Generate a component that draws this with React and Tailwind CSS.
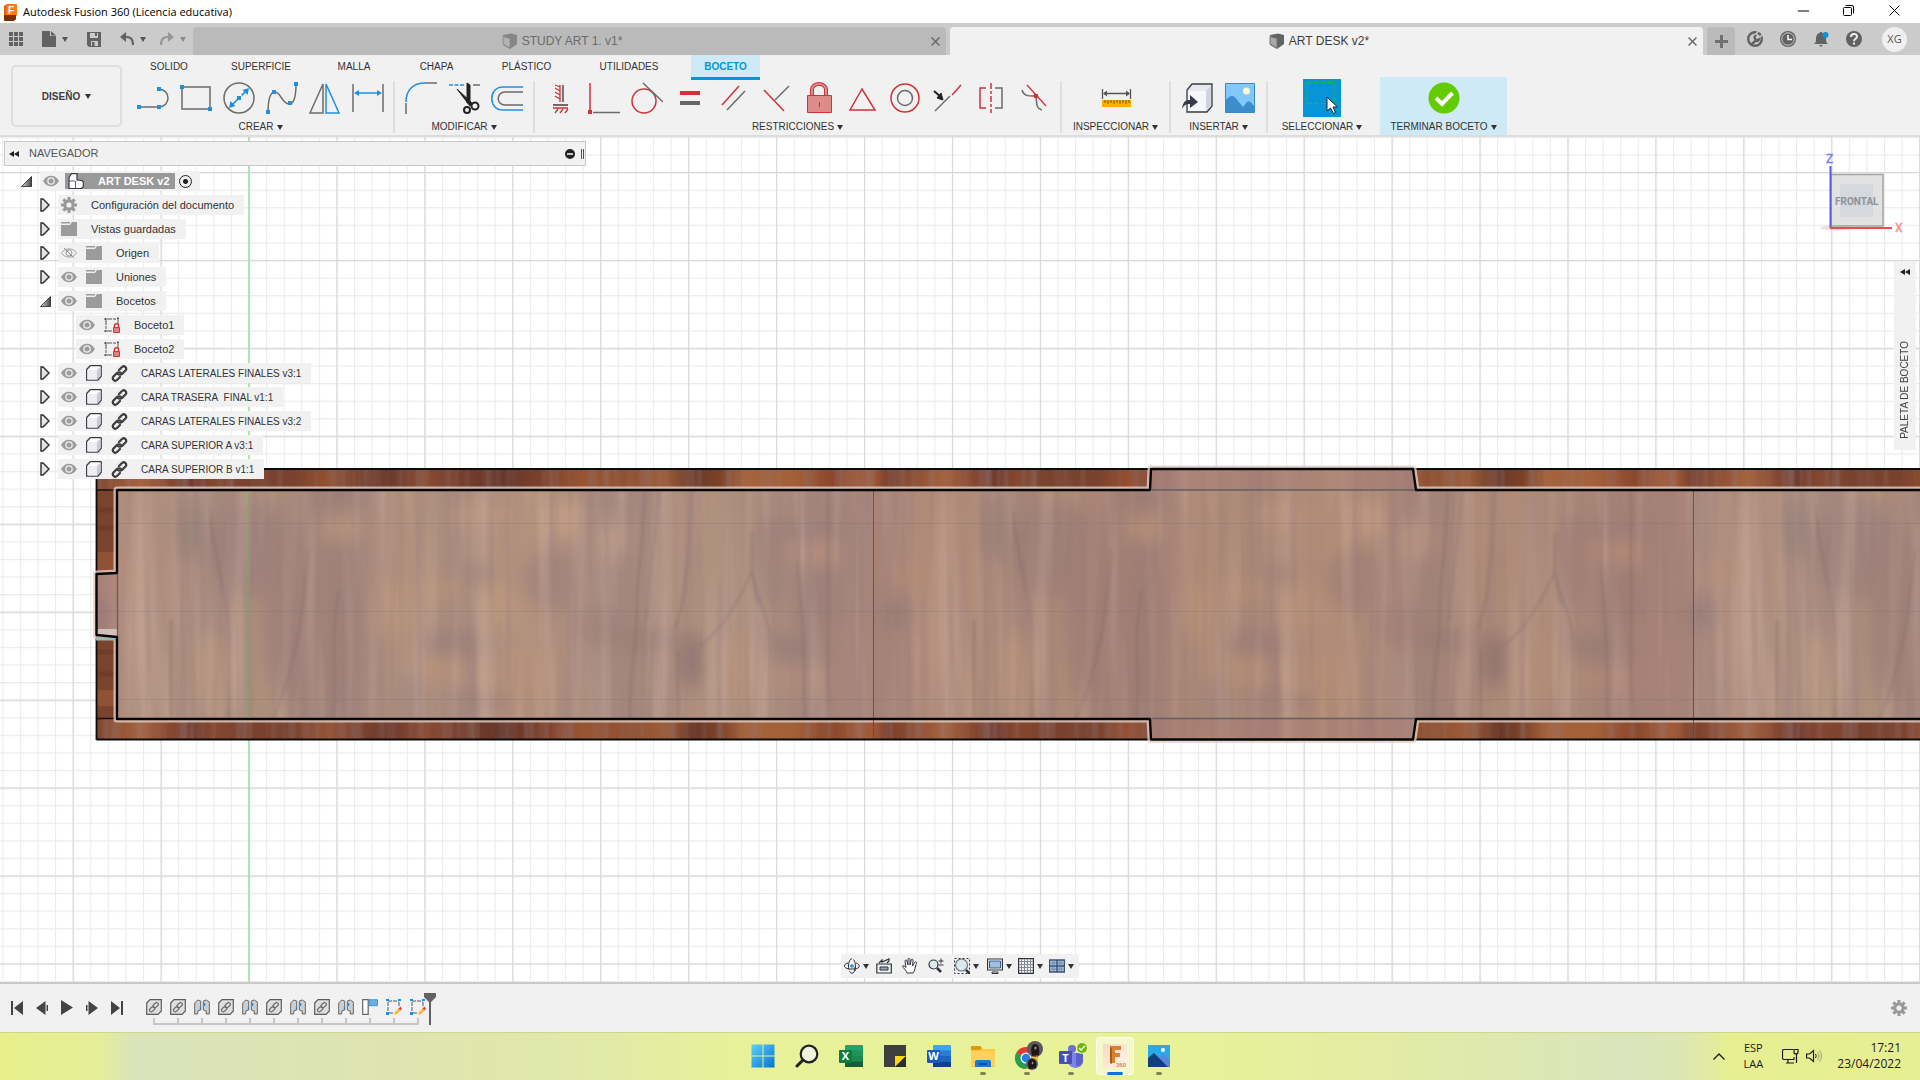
import React from "react";

const UI = "font-['Liberation_Sans',Arial,sans-serif]";
const SEGOE = "font-['Open_Sans','Noto_Sans',sans-serif]";

function Svg({ w = 32, h = w, vb, className = "", children }) {
  return (
    <svg
      width={w}
      height={h}
      viewBox={vb || `0 0 ${w} ${h}`}
      fill="none"
      aria-hidden="true"
      className={`shrink-0 ${className}`}
    >
      {children}
    </svg>
  );
}

function Caret({ color = "#333" }) {
  return (
    <Svg w={6} h={5}>
      <path d="M0 0h6L3 5z" fill={color} />
    </Svg>
  );
}

/* ---------- Title bar ---------- */

function FusionLogo() {
  return (
    <Svg w={16} h={18}>
      <path d="M2 3 5 1h9v15l-3 2H2z" fill="#e5600a" />
      <rect x="4" y="1" width="11" height="12" rx="1" fill="#ff7a12" />
      <path d="M2 12h12v4l-2 2H3l-1-1z" fill="#7a2f05" />
      <text x="6" y="11" fontSize="10" fontWeight="700" fill="#fff" fontFamily="Liberation Sans">F</text>
    </Svg>
  );
}

function TitleBar() {
  return (
    <header className={`flex h-[23px] shrink-0 items-center bg-white pr-[3px] pl-0.5 text-black ${SEGOE}`}>
      <FusionLogo />
      <h1 className="ml-[5px] text-[11px] leading-4">Autodesk Fusion 360 (Licencia educativa)</h1>
      <div className="ml-auto flex h-[21px] self-start">
        <button aria-label="Minimizar" className="flex w-[46px] items-center justify-center">
          <Svg w={11}><path d="M0 6h11" stroke="#000" /></Svg>
        </button>
        <button aria-label="Restaurar" className="flex w-[45px] items-center justify-center">
          <Svg w={11}>
            <rect x=".5" y="2.5" width="8" height="8" rx="1" stroke="#000" />
            <path d="M2.5 .5H9a1.5 1.5 0 0 1 1.500 1.500V8.500" stroke="#000" />
          </Svg>
        </button>
        <button aria-label="Cerrar" className="flex w-[46px] items-center justify-center">
          <Svg w={11}><path d="m.5.5 10 10m0-10-10 10" stroke="#000" /></Svg>
        </button>
      </div>
    </header>
  );
}

/* ---------- Document tabs ---------- */

function DocCube({ dim }) {
  return (
    <Svg w={16}>
      <path d="M1 2 9 .5 15 2v9l-7 5-7-4z" fill={dim ? "#858585" : "#636363"} />
      <path d="M1 3.500 8 5.500V15l-7-4z" fill={dim ? "#b3b3b3" : "#a9a9a9"} stroke={dim ? "#8c8c8c" : "#777"} />
    </Svg>
  );
}

function DocTab({ title, active }) {
  return (
    <div
      className={`flex h-7 flex-1 items-center rounded-t-[4px] pr-[3px] ${
        active ? "bg-[#f1f1f1] text-[#3c3c3c]" : "bg-[#bababa] text-[#6a6a6a]"
      }`}
    >
      <button className="flex flex-1 items-center justify-center gap-1 pl-1 text-[12px] leading-4">
        <DocCube dim={!active} />
        {title}
      </button>
      <button aria-label={`Cerrar ${title}`} className="flex size-4 items-center justify-center">
        <Svg w={9}><path d="m.5.5 8 8m0-8-8 8" stroke="#6c6c6c" strokeWidth="1.500" /></Svg>
      </button>
    </div>
  );
}

function TabBar() {
  return (
    <div className="flex h-8 shrink-0 items-end bg-[#cbcbcb]">
      <div className="flex h-8 w-[193px] shrink-0 items-center pl-[9px]">
        <button aria-label="Panel de datos">
          <Svg w={14}>
            {[0, 5, 10].map((x) => [0, 5, 10].map((y) => <rect key={`${x}-${y}`} x={x} y={y} width="4" height="4" fill="#626262" />))}
          </Svg>
        </button>
        <button aria-label="Archivo" className="ml-[19px] flex items-center gap-[6px]">
          <Svg w={14} h={16}>
            <path d="M0 0h8v5h6v11H0z" fill="#626262" />
            <path d="m9 0 5 4.500H9z" fill="#626262" />
          </Svg>
          <Caret color="#555" />
        </button>
        <button aria-label="Guardar" className="ml-[19px]">
          <Svg w={14} h={15}>
            <path d="M0 0h14v15H2l-2-2z" fill="#626262" />
            <path d="M3 1h8v5H3zM4 9h7v5H4z" fill="#cbcbcb" />
            <path d="M5 10h2.500v4H5zM8 1h2v3H8z" fill="#626262" />
          </Svg>
        </button>
        <button aria-label="Deshacer" className="ml-[19px] flex items-center gap-[6px]">
          <Svg w={14} h={14}>
            <path d="M4 5h3c4 0 6 2 6 8" stroke="#626262" strokeWidth="2.200" />
            <path d="M0 5 6 0v10z" fill="#626262" />
          </Svg>
          <Caret color="#555" />
        </button>
        <button aria-label="Rehacer" className="ml-[14px] flex items-center gap-[6px]">
          <Svg w={14} h={14}>
            <path d="M10 5H7c-4 0-6 2-6 8" stroke="#969696" strokeWidth="2.200" />
            <path d="M14 5 8 0v10z" fill="#969696" />
          </Svg>
          <Caret color="#8b8b8b" />
        </button>
      </div>
      <div className="flex flex-1 gap-1">
        <DocTab title="STUDY ART 1. v1*" />
        <DocTab title="ART DESK v2*" active />
      </div>
      <button aria-label="Nueva pestaña" className="ml-1 flex h-7 w-7 items-center justify-center rounded-t-[4px] bg-[#bababa]">
        <Svg w={13}><path d="M6.500 0v13M0 6.500h13" stroke="#707070" strokeWidth="3" /></Svg>
      </button>
      <div className="flex h-8 items-center gap-[17px] pr-[13px] pl-3">
        <button aria-label="Extensiones">
          <Svg w={16}>
            <circle cx="8" cy="8" r="6.800" stroke="#626262" strokeWidth="2.400" />
            <path d="M3 13 7.500 9C5 6 7 3 10 4L8.500 6.500 10 8l3-1.500c1 3-2 5.500-4 4.500l-4 3.500z" fill="#626262" />
            <path d="m11.500 0-2.500 3M15.500 3.500 13 6" stroke="#cbcbcb" strokeWidth="1.500" />
          </Svg>
        </button>
        <button aria-label="Estado de trabajos">
          <Svg w={16}>
            <circle cx="8" cy="8" r="8" fill="#626262" />
            <circle cx="8" cy="8" r="6.200" stroke="#cbcbcb" />
            <path d="M8 4v4.500h4" stroke="#fff" strokeWidth="1.500" />
          </Svg>
        </button>
        <button aria-label="Notificaciones">
          <Svg w={16} h={17}>
            <path d="M1 13c2-1 2-3 2-6 0-3 2-5 4-5V1h2v1c2 0 4 2 4 5 0 3 0 5 2 6zM6 14h4l-2 2z" fill="#626262" />
            <circle cx="12.500" cy="4" r="3" fill="#0696d7" />
          </Svg>
        </button>
        <button aria-label="Ayuda">
          <Svg w={16}>
            <circle cx="8" cy="8" r="8" fill="#626262" />
            <path d="M5 6c0-4 6-4 6-.5C11 8 8 7.500 8 10.200M8 11.500v2" stroke="#eee" strokeWidth="2" />
          </Svg>
        </button>
        <button className={`-my-1 ml-[3px] flex size-[25px] items-center justify-center rounded-full bg-[#f0f0f0] text-[11px] text-[#555] ${SEGOE}`}>XG</button>
      </div>
    </div>
  );
}

/* ---------- Ribbon ---------- */

const G = "#6b6b6b";
const B = "#1f8fe0";
const R = "#d03238";

const Dot = ({ x, y, c = B }) => <rect x={x - 2} y={y - 2} width="4" height="4" fill={c} />;

const createIcons = [
  ["Línea", <><path d="M2 25h20M22 7c12 1 12 17 0 18" stroke={G} strokeWidth="1.500" /><Dot x={2} y={25} /><Dot x={22} y={25} /><Dot x={22} y={7} /></>],
  ["Rectángulo", <><path d="M2 5h28v22H2z" stroke={G} strokeWidth="1.500" /><Dot x={2} y={5} /><Dot x={30} y={27} /></>],
  ["Círculo", <><circle cx="16" cy="16" r="15" stroke={G} strokeWidth="1.500" /><path d="m8 24 16-16" stroke={B} strokeWidth="1.500" strokeDasharray="9 2 2 2 12" /><path d="m6 26 1.500-7 5 5zM26 6l-1.500 7-5-5z" fill={B} /><Dot x={16} y={16} /></>],
  ["Spline", <><path d="M2 31C2 15 5 10 9 10c6 0 7 12 14 12 5 0 7-6 7-20" stroke={G} strokeWidth="1.500" /><Dot x={2} y={30} /><Dot x={8} y={10} /><Dot x={24} y={21} /><Dot x={30} y={2} /></>],
  ["Simetría", <><path d="M14 2v29H1z" stroke={G} strokeWidth="1.500" /><path d="M17 2v29h13z" stroke={B} strokeWidth="1.500" /></>],
  ["Cota", <><path d="M1 2v28M31 2v28" stroke={G} strokeWidth="1.500" /><path d="M4 11h24" stroke={B} strokeWidth="1.500" /><path d="m2 11 5-3v6zM30 11l-5-3v6z" fill={B} /></>],
];
const modifyIcons = [
  ["Empalme", <><path d="M1 20C1 8 8 1 20 1" stroke={B} strokeWidth="1.500" /><path d="M1 21v11M20 1h12" stroke={G} strokeWidth="1.500" /></>],
  ["Recortar", <><path d="M1 3h15" stroke={B} strokeWidth="1.500" strokeDasharray="4 1.500" /><path d="M25 3h7" stroke={G} strokeWidth="1.500" /><path d="M19 1v20h3V3zM9 7l13 17 2-3z" fill="#222" stroke="#222" /><circle cx="19" cy="28" r="3" stroke="#222" strokeWidth="2" /><circle cx="27" cy="24" r="3.500" stroke="#222" strokeWidth="2" /></>],
  ["Desfase", <><path d="M32 5H12c-15 0-15 23 0 23h20" stroke={B} strokeWidth="1.500" /><path d="M32 10H14c-9 0-9 13 0 13h18" stroke={G} strokeWidth="1.500" /></>],
];
const constraintIcons = [
  ["Horizontal/Vertical", <><path d="M15 3v17M15 5l-5-2M15 9l-5-3M15 13l-5-3M15 17l-5-3M8 26h15M10 31l3-4M15 31l3-4M20 31l3-4" stroke={R} strokeWidth="1.300" /><path d="M18 3v17M8 23h15" stroke={G} strokeWidth="1.800" /></>],
  ["Perpendicular", <><path d="M2 1v27" stroke={R} strokeWidth="1.500" /><path d="M5 30.500h27" stroke={G} strokeWidth="1.500" /><Dot x={2} y={30} c={R} /></>],
  ["Tangente", <><circle cx="13" cy="19" r="12" stroke={R} strokeWidth="1.500" /><path d="m12 1 20 19" stroke={G} strokeWidth="1.500" /></>],
  ["Igual", <><path d="M6 9h20v4H6z" fill={R} /><path d="M6 19h20v4H6z" fill="#666" /></>],
  ["Paralelo", <><path d="M5 23 22 4" stroke={R} strokeWidth="1.500" /><path d="M10 28 28 9" stroke={G} strokeWidth="1.500" /></>],
  ["Coincidente", <><path d="m4 8 20 21" stroke={R} strokeWidth="1.500" /><path d="M15 18 29 4" stroke={G} strokeWidth="1.500" /></>],
  ["Bloquear", <><path d="M9 13V8c0-8 14-8 14 0v5" stroke={R} strokeWidth="4" /><path d="M9 13V8c0-8 14-8 14 0v5" stroke="#dd8b8b" strokeWidth="2" /><path d="M4.500 13.500h24v17h-24z" fill="#dd8b8b" stroke={R} /><path d="M16.500 20v5" stroke={R} /></>],
  ["Punto medio", <path d="M16 7 4 28h25z" stroke={R} strokeWidth="1.500" />],
  ["Concéntrico", <><circle cx="16" cy="16" r="14" stroke={R} strokeWidth="1.500" /><circle cx="16" cy="16" r="7.500" stroke={G} strokeWidth="1.500" /></>],
  ["Colineal", <><path d="M20 13 29 3" stroke={R} strokeWidth="1.500" /><path d="M3 29 18 14" stroke={G} strokeWidth="1.500" /><path d="m2 9 8 7" stroke="#222" strokeWidth="2" /><path d="m11 18-2-7-4 5z" fill="#222" stroke="#222" /></>],
  ["Simetría (restricción)", <><path d="M11 6H5v20h6" stroke={R} strokeWidth="1.500" /><path d="M16 1v30" stroke={R} strokeWidth="1.500" strokeDasharray="6 2 3 2" /><path d="M20 6h7v20h-7" stroke={G} strokeWidth="1.500" /></>],
  ["Curvatura", <><path d="M4 8c2 7 8 6 14 6 1 6-1 12 6 14" stroke={G} strokeWidth="1.500" /><path d="m9 3 19 21" stroke={R} strokeWidth="1.300" /><Dot x={18} y={14} c={R} /></>],
];
const inspectIcons = [
  ["Medir", <><path d="M2.500 7v10M30.500 7v10M4 11.500h25" stroke="#555" strokeWidth="1.300" /><path d="m3 11.500 4-3v6zM30 11.500l-4-3v6z" fill="#555" /><path d="M2 18h29v7H2z" fill="#ffab0f" /><path d="M5 18v3M8 18v4M11 18v3M14 18v4M17 18v3M20 18v4M23 18v3M26 18v4M29 18v3" stroke="#7d5200" /></>],
];
const insertIcons = [
  ["Insertar derivado", <><path d="m6 8 5-6h20v22l-5 6H6z" fill="#e6e9ee" stroke="#383c48" strokeWidth="1.300" /><path d="M7 9h18v20H7z" fill="#f5f7f9" /><path d="M25 9v20l5-5V4z" fill="#d0d4dc" /><path d="M1 27c1-8 4-9 8-9v-5l8 7-8 6v-4c-4 0-6 1-8 5z" fill="#383c48" /></>],
  ["Insertar imagen", <><path d="M1.500 1.500h29v29h-29z" fill="#82c8fb" stroke="#3a88c4" /><path d="M2 18c5-6 8-5 12 1l5 6 4-5c3-2 4 1 7 4v6H2z" fill="#3c8dcc" /><circle cx="22.500" cy="9" r="3.500" fill="#fdfad0" /></>],
];

function ToolGroup({ label, icons, className }) {
  return (
    <div className={`my-[2px] mt-[4px] flex flex-col items-center border-r-2 border-[#dedede] ${className}`}>
      <div className="flex">
        {icons.map(([name, art]) => (
          <button key={name} aria-label={name} className="flex h-[34px] w-[43px] items-center justify-center">
            <Svg w={32}>{art}</Svg>
          </button>
        ))}
      </div>
      <GroupLabel>{label}</GroupLabel>
    </div>
  );
}

function GroupLabel({ children }) {
  return (
    <button className="mt-[6px] flex items-center gap-[3px] whitespace-nowrap text-[10px] leading-3 text-[#333]">
      {children}
      <Caret />
    </button>
  );
}

const ribbonTabs = [
  ["SOLIDO", "w-[64px]"],
  ["SUPERFICIE", "w-[120px]"],
  ["MALLA", "w-[66px]"],
  ["CHAPA", "w-[99px]"],
  ["PLÁSTICO", "w-[81px]"],
  ["UTILIDADES", "w-[124px]"],
];

function Ribbon() {
  return (
    <div className="flex h-[82px] shrink-0 border-b-2 border-[#dcdcdc] bg-[#f1f1f1]">
      <button className="mt-[10px] ml-[11px] flex h-[62px] w-[111px] shrink-0 items-center justify-center gap-[5px] rounded-[5px] border-2 border-[#dedede] text-[10px] font-bold text-[#3c3c3c]">
        DISEÑO
        <Caret />
      </button>
      <div className="ml-[6px] flex flex-1 flex-col">
        <nav className="ml-[9px] flex h-[22px] items-start text-[10px] text-[#333]">
          {ribbonTabs.map(([t, w]) => (
            <button key={t} className={`h-[22px] shrink-0 text-center ${w}`}>{t}</button>
          ))}
          <button className="h-[25px] w-[69px] shrink-0 border-b-[3px] border-[#0696d7] bg-[#cdeaf6] font-bold text-[#0696d7]">BOCETO</button>
        </nav>
        <div className="flex flex-1">
          <ToolGroup label="CREAR" icons={createIcons} className="w-[267px]" />
          <ToolGroup label="MODIFICAR" icons={modifyIcons} className="w-[140px]" />
          <ToolGroup label="RESTRICCIONES" icons={constraintIcons} className="w-[527px]" />
          <ToolGroup label="INSPECCIONAR" icons={inspectIcons} className="w-[109px]" />
          <ToolGroup label="INSERTAR" icons={insertIcons} className="w-[97px]" />
          <div className="flex w-[108px] flex-col items-center pt-[2px]">
            <button aria-label="Seleccionar" className="flex h-[38px] w-[38px] items-center justify-center bg-[#0696d7]">
              <Svg w={38}>
                <path d="M4 3.500h27v21H4z" stroke="#25b53c" strokeDasharray="5 2" />
                <path d="M24 18v14l3.500-3 3 5.500 2-1-2.500-5.500h4.500z" fill="#fff" stroke="#222" />
              </Svg>
            </button>
            <div className="-mt-[2px]"><GroupLabel>SELECCIONAR</GroupLabel></div>
          </div>
          <div className="ml-1 flex w-[127px] flex-col items-center bg-[#cdeaf6] pt-[4px]">
            <button aria-label="Terminar boceto" className="flex h-[34px] items-center">
              <Svg w={32}>
                <circle cx="16" cy="16" r="15.500" fill="#63cb00" />
                <path d="m8 16 6 6L24.500 11" stroke="#fff" strokeWidth="4" />
              </Svg>
            </button>
            <GroupLabel>TERMINAR BOCETO</GroupLabel>
          </div>
        </div>
      </div>
    </div>
  );
}

/* ---------- Viewport drawing ---------- */

const faceStops = [
  [0, "#a58377"], [5, "#a3857a"], [8, "#ae8d7c"], [14, "#b0907d"], [19, "#a4897c"], [23, "#a68879"],
  [27, "#ad9079"], [31, "#a08176"], [36, "#9a7e76"], [40, "#a8897a"], [45, "#b0917b"], [50, "#a5887a"],
  [55, "#b1917c"], [61, "#b0907a"], [69, "#a0857a"], [72, "#a0857a"], [77, "#ac8d7a"], [85, "#ac8f7c"],
  [91, "#a58879"], [95, "#a08177"], [100, "#a58377"],
];
const railStops = [
  [0, "#a05a38"], [2, "#a05a38"], [4, "#7b402c"], [6, "#85472f"], [11, "#a5643f"], [14, "#8d4c32"],
  [17, "#70392c"], [20, "#85472f"], [24, "#79422f"], [30, "#7a422e"], [34, "#93502f"], [38, "#7b432f"],
  [42, "#6d3b2c"], [46, "#8a4b33"], [52, "#713c2b"], [56, "#643529"], [62, "#84452d"], [66, "#975532"],
  [72, "#90502f"], [76, "#9d5d39"], [80, "#6a392a"], [83, "#7d4227"], [86, "#a5633d"], [92, "#a36039"],
  [97, "#8b472c"], [100, "#a05a38"],
];

const blobs = [
  [137, 40, 8, 26, "#897a73"], [40, 125, 14, 14, "#937c78"], [200, 60, 40, 40, "#997e77"],
  [240, 130, 26, 70, "#9b7e76"], [290, 38, 18, 12, "#b99678"], [430, 25, 26, 10, "#b9957f"],
  [510, 28, 14, 18, "#c49f85"], [560, 50, 14, 18, "#b89680"], [425, 85, 9, 9, "#8b7470"],
  [370, 100, 34, 9, "#b59378"], [500, 90, 26, 26, "#9e8178"], [345, 120, 14, 24, "#b8957a"],
  [450, 115, 14, 20, "#bc987b"], [400, 155, 26, 12, "#977d77"], [390, 180, 20, 12, "#b89379"],
  [470, 195, 24, 26, "#b89379"], [430, 212, 26, 7, "#987d76"], [545, 135, 20, 18, "#987c75"],
  [360, 215, 8, 28, "#8f7974"], [638, 170, 9, 24, "#816c6a"], [720, 70, 14, 40, "#9c8078"],
  [760, 62, 24, 6, "#bd937a"], [750, 40, 40, 7, "#997c77"], [725, 158, 44, 9, "#927a75"],
  [765, 110, 16, 26, "#997d76"], [160, 190, 20, 40, "#b2937c"], [590, 150, 30, 10, "#977c73"],
  [750, 190, 24, 7, "#b38c78"], [690, 180, 24, 30, "#b3927c"], [60, 85, 20, 12, "#b28d79"],
];

function Viewport() {
  const inner =
    "M117 490H1150L1151 469H1413L1416 490H1940V719H1416L1413 739.500H1151L1150 719H117V637L96.500 635V574L117 573Z";
  return (
    <svg className="absolute inset-0 size-full" aria-hidden="true">
      <defs>
        <pattern id="minor" width="17.586" height="17.586" patternUnits="userSpaceOnUse" x="248.500" y="172">
          <path d="M0 .5H18M.5 0V18" stroke="#ebebeb" strokeWidth="1.200" />
        </pattern>
        <pattern id="major" width="87.930" height="87.930" patternUnits="userSpaceOnUse" x="248.500" y="172">
          <path d="M0 .5H88M.5 0V88" stroke="#d8d8d8" strokeWidth="1.300" />
        </pattern>
        <linearGradient id="face">
          {faceStops.map(([o, c]) => <stop key={o} offset={`${o}%`} stopColor={c} />)}
        </linearGradient>
        <linearGradient id="rail">
          {railStops.map(([o, c]) => <stop key={o} offset={`${o}%`} stopColor={c} />)}
        </linearGradient>
        <filter id="soft" x="-50%" y="-50%" width="200%" height="200%"><feGaussianBlur stdDeviation="9" /></filter>
        <filter id="thin" x="-20%" y="-20%" width="140%" height="140%"><feGaussianBlur stdDeviation="1.500" /></filter>
        <filter id="grain" x="0" y="0" width="100%" height="100%">
          <feTurbulence type="fractalNoise" baseFrequency="0.08 0.003" numOctaves="3" seed="7" />
          <feColorMatrix values="0 0 0 0 .30  0 0 0 0 .20  0 0 0 0 .20  2.600 0 0 0 -1.100" />
        </filter>
        <filter id="figure" x="0" y="0" width="100%" height="100%">
          <feTurbulence type="fractalNoise" baseFrequency="0.050 0.004" numOctaves="2" seed="12" />
          <feColorMatrix values="0 0 0 0 .86  0 0 0 0 .68  0 0 0 0 .56  3 0 0 0 -1.350" />
        </filter>
        <clipPath id="bodyClip"><rect x="96" y="469" width="3000" height="270" /></clipPath>
        <clipPath id="innerClip"><path d={inner} /></clipPath>
        <g id="railTile">
          <rect x="0" y="465" width="804" height="280" fill="url(#rail)" />
          <rect x="0" y="465" width="804" height="280" filter="url(#grain)" opacity=".45" />
        </g>
        <g id="faceTile">
          <rect x="0" y="465" width="804" height="280" fill="url(#face)" />
          <g transform="translate(0 490)">
            <g filter="url(#soft)" opacity=".9">
              {blobs.map(([x, y, rx, ry, c], i) => <ellipse key={i} cx={x} cy={y} rx={rx * 1.2} ry={ry * 1.2} fill={c} />)}
            </g>
            <g stroke="#6f6262" strokeWidth="2.200" fill="none" filter="url(#thin)" opacity=".45">
              <path d="M154 0C158 60 172 90 176 140V230M256 60C250 120 245 170 220 230" />
              <path d="M118 130V230M286 100C276 150 285 190 280 230" />
              <path d="M592 0C590 60 583 90 584 120C584 160 575 190 577 230M606 0C602 60 595 80 594 130" />
              <path d="M638 0C636 80 632 110 622 140" />
              <path d="M699 42V80C690 105 670 138 648 156M699 80C702 110 715 120 717 150V230" />
              <path d="M746 0V90C752 140 750 180 752 230M775 0V230" />
              <path d="M600 140C598 180 596 200 597 230M625 160V230" />
            </g>
            <path d="M699 80 709 118 703 112Z" fill="#746a64" opacity=".6" filter="url(#thin)" />
          </g>
          <rect x="0" y="465" width="804" height="280" filter="url(#figure)" opacity=".24" />
          <rect x="0" y="465" width="804" height="280" filter="url(#grain)" opacity=".46" />
        </g>
      </defs>
      <g transform="translate(0 -137)">
        <rect x="0" y="137" width="100%" height="100%" fill="#fff" />
        <rect x="0" y="137" width="100%" height="100%" fill="url(#minor)" />
        <rect x="0" y="137" width="100%" height="100%" fill="url(#major)" />
        <path d="M249 137V2200" stroke="#9be79b" strokeWidth="1.500" />

        <g clipPath="url(#bodyClip)">
          <use href="#railTile" x="53" />
          <use href="#railTile" x="856" />
          <use href="#railTile" x="1659" />
          <rect x="97" y="491" width="20" height="227" fill="#7b432e" />
          <path d="M97 510h20M97 528h20M97 652h20M97 674h20" stroke="#683627" strokeWidth="5" opacity=".5" />
          <path d="M97 552h20v18H97zM97 690h20v16H97z" fill="#a05b38" opacity=".6" />
          <path d="M96 490h21M96 718.500h21" stroke="#111" strokeWidth="1.500" />
        </g>
        <path d="M96.500 740V469H3000M96.500 739.500H3000" stroke="#0c0c0c" strokeWidth="1.800" fill="none" />

        <path d={inner} stroke="#e3cfc4" strokeOpacity=".8" strokeWidth="7" strokeLinejoin="round" fill="none" />
        <g clipPath="url(#innerClip)">
          <use href="#faceTile" x="53" />
          <use href="#faceTile" x="856" />
          <use href="#faceTile" x="1659" />
          <rect x="97" y="465" width="3000" height="280" fill="#c9a090" opacity=".12" />
          <rect x="873" y="465" width="820" height="280" fill="#a86050" opacity=".09" />
          <path d="M97 492h20v228H97zM1150 465h267v25h-267zM1150 719h267v25h-267z" fill="#a4726c" opacity=".3" />
          <path d="M97 523.500H1940M97 611.500H1940M97 699.500H1940" stroke="#7d716c" strokeOpacity=".25" />
          <path d="M97 629h20v9H97z" fill="#dccfc9" opacity=".8" />
        </g>
        <path d="M96 639h21" stroke="#9bb8b3" strokeWidth="3" />
        <path d="M117.500 574V636M1152 490H1415M1152 718.500H1415" stroke="#5f6062" strokeWidth="1.300" />
        <path d="M873.500 490V739M1693.500 490V739" stroke="#54494a" strokeWidth="1" strokeOpacity=".8" />
        <path d={inner} stroke="#060606" strokeWidth="2.400" fill="none" strokeLinejoin="round" />
        <path d="M249 491V718" stroke="#6cae62" strokeOpacity=".75" strokeWidth="1.300" />
      </g>
    </svg>
  );
}

/* ---------- Browser tree ---------- */

function Eye({ off }) {
  return off ? (
    <Svg w={16} h={12}>
      <path d="M.5 6C4 .5 12 .5 15.500 6 12 11.500 4 11.500.5 6Z" stroke="#a0a0a0" />
      <circle cx="8" cy="6" r="3" stroke="#a0a0a0" />
      <path d="m3 1 10 10" stroke="#8a8a8a" />
    </Svg>
  ) : (
    <Svg w={16} h={12}>
      <path d="M0 6C4-1 12-1 16 6c-4 7-12 7-16 0Z" fill="#9b9b9b" />
      <circle cx="8" cy="6" r="3.800" fill="#f1f1f1" />
      <circle cx="8" cy="6" r="2.500" fill="#9b9b9b" />
    </Svg>
  );
}

function Gear({ size = 16 }) {
  return (
    <Svg w={size} vb="0 0 16 16">
      <g fill="#999">
        {[0, 45, 90, 135].map((a) => <rect key={a} x="6.500" y="0" width="3" height="16" transform={`rotate(${a} 8 8)`} />)}
        <circle cx="8" cy="8" r="5.800" />
      </g>
      <circle cx="8" cy="8" r="2.600" fill="#f1f1f1" />
    </Svg>
  );
}

const Folder = () => (
  <Svg w={16} h={14}>
    <path d="M0 3h9l2-3h5v14H0z" fill="#9b9b9b" /><path d="M0 0h9v1.500H0z" fill="#9b9b9b" />
  </Svg>
);
const SketchLock = () => (
  <Svg w={16} h={17}>
    <path d="M3 2h9M2 3v9M14 3v4M3 14h5" stroke="#555" strokeDasharray="5 1" />
    <path d="M.5 1h2v2h-2zM13 .5h2v2h-2zM.5 13h2v2h-2z" fill="#555" />
    <path d="M10.500 10V8.500c0-2.500 4-2.500 4 0V10" stroke={R} strokeWidth="1.500" />
    <path d="M9.500 10.500h6v5h-6z" fill="#dd8080" stroke={R} />
  </Svg>
);
const Cube = () => (
  <Svg w={16}>
    <path d="m.7 4.500 3.500-3.800h11v10.500l-3.500 4H.7z" fill="#fff" stroke="#383c48" strokeWidth="1.300" strokeLinejoin="round" />
    <path d="M11 5v10l3.700-4V1.500z" fill="#c5cad3" /><path d="M1.500 5H11v9.500H1.500z" fill="#eceef2" />
  </Svg>
);
const Link = () => (
  <Svg w={17}>
    <g stroke="#3c3c3c" strokeWidth="2.200" strokeLinecap="round">
      <path d="m8 5 3-3c2.500-2 5.500 1 3.500 3.500l-3.500 3.500c-1 1-3 1-4 0" />
      <path d="m9 12-3 3c-2.500 2-5.500-1-3.500-3.500L6 8c1-1 3-1 4 0" />
    </g>
  </Svg>
);
const Closed = () => (
  <Svg w={10} h={14}><path d="M1 1h2l6 6-6 6H1z" fill="#e3e3e3" stroke="#2b2b2b" strokeWidth="1.400" /></Svg>
);
const Open = () => (
  <Svg w={11}>
    <defs><linearGradient id="open"><stop stopColor="#ddd" /><stop offset="1" stopColor="#444" /></linearGradient></defs>
    <path d="M10.500 .5v10H.5z" fill="url(#open)" stroke="#222" strokeWidth=".8" />
  </Svg>
);

const tree = [
  { t: "Configuración del documento", icons: [<Gear key="g" />] },
  { t: "Vistas guardadas", icons: [<Folder key="f" />] },
  { t: "Origen", icons: [<Eye key="e" off />, <Folder key="f" />] },
  { t: "Uniones", icons: [<Eye key="e" />, <Folder key="f" />] },
  { t: "Bocetos", open: true, icons: [<Eye key="e" />, <Folder key="f" />] },
  { t: "Boceto1", leaf: true, icons: [<Eye key="e" />, <SketchLock key="s" />] },
  { t: "Boceto2", leaf: true, icons: [<Eye key="e" />, <SketchLock key="s" />] },
  ...[
    "CARAS LATERALES FINALES v3:1",
    "CARA TRASERA\u00a0 FINAL v1:1",
    "CARAS LATERALES FINALES v3:2",
    "CARA SUPERIOR A v3:1",
    "CARA SUPERIOR B v1:1",
  ].map((t) => ({ t, caps: true, icons: [<Eye key="e" />, <Cube key="c" />, <Link key="l" />] })),
];

function Navigator() {
  return (
    <aside className="absolute top-1 left-1 w-[582px]">
      <div className="flex h-[25px] items-center border border-[#c9c9c9] bg-[#f1f1f1] pl-1">
        <button aria-label="Contraer navegador">
          <Svg w={10} h={6}><path d="M5 0v6L0 3zM10 0v6L5 3z" fill="#222" /></Svg>
        </button>
        <h2 className="ml-[10px] text-[11px] text-[#555]">NAVEGADOR</h2>
        <button aria-label="Opciones" className="ml-auto">
          <Svg w={10}><circle cx="5" cy="5" r="5" fill="#222" /><path d="M2 5h6" stroke="#fff" strokeWidth="1.500" /></Svg>
        </button>
        <span className="mr-px ml-[6px] h-2.5 w-[3px] border-x border-[#555]" />
      </div>
      <ul className="mt-[3px] text-[11px] text-[#333]">
        <li className="flex h-6 items-center pl-[17px]">
          <button aria-label="Contraer"><Open /></button>
          <div className="ml-2 flex h-5 items-center bg-[#f1f1f1] pr-2 pl-[3px]">
            <Eye />
            <button className="ml-[6px] flex h-4 w-[110px] items-center bg-[#999] pl-[3px] font-bold text-white">
              <Svg w={16}>
                <path d="M1 4.500 3.500.7H9V7l5 .5 1.300 1.500v5l-2 1.500H1z" fill="#fff" stroke="#383c48" strokeWidth="1.200" />
                <path d="M7.500 15V8M1 8h6" stroke="#383c48" strokeWidth=".8" />
              </Svg>
              <span className="ml-[14px] whitespace-nowrap text-[11px]">ART DESK v2</span>
            </button>
            <input type="radio" name="active" aria-label="Activar componente" defaultChecked className="ml-1 size-[13px] appearance-none rounded-full border border-[#222] bg-[radial-gradient(circle,#222_2px,transparent_3px)]" />
          </div>
        </li>
        {tree.map((n, i) => (
          <li key={i} className={`flex h-6 items-center ${n.leaf ? "pl-[72px]" : "pl-9"}`}>
            {!n.leaf && (
              <button aria-label={n.open ? "Contraer" : "Expandir"} className="flex w-[18px] items-center">
                {n.open ? <Open /> : <Closed />}
              </button>
            )}
            <div className="flex h-5 items-center gap-[9px] bg-[#f1f1f1] pr-[10px] pl-[3px]">
              {n.icons}
              <span className={`whitespace-nowrap ${n.caps ? "ml-1 text-[10px]" : "ml-[5px]"}`}>{n.t}</span>
            </div>
          </li>
        ))}
      </ul>
    </aside>
  );
}

function ViewCube() {
  return (
    <div className="absolute top-3 right-3">
      <Svg w={92} h={90}>
        <ellipse cx="20" cy="79" rx="16" ry="2.500" fill="#000" opacity=".1" />
        <path d="M15 25.500h52V77H15z" fill="#e2e2e2" stroke="#a3a3a3" strokeWidth="1.500" />
        <path d="M24 35h33v33H24z" fill="#d5d8dc" />
        <text x="19" y="56" fontSize="10" fontWeight="700" fill="#8d9299" fontFamily="Roboto, sans-serif">FRONTAL</text>
        <path d="M14.500 17v62" stroke="#5a5ae8" strokeWidth="2" />
        <path d="M14 79h62" stroke="#f04b4b" strokeWidth="2" />
        <text x="10" y="14" fontSize="12" fill="#7f7ff5" stroke="#7f7ff5" strokeWidth=".4" fontFamily="Roboto, sans-serif">Z</text>
        <text x="79" y="83" fontSize="12" fill="#fb8a8a" stroke="#fb8a8a" strokeWidth=".4" fontFamily="Roboto, sans-serif">X</text>
      </Svg>
    </div>
  );
}

function SketchPalette() {
  return (
    <aside className="absolute top-[124px] right-1 flex h-[189px] w-[22px] flex-col items-center justify-between bg-[#f1f1f1] pt-2 pb-[11px]">
      <button aria-label="Expandir paleta">
        <Svg w={10} h={6}><path d="M5 0v6L0 3zM10 0v6L5 3z" fill="#222" /></Svg>
      </button>
      <span className="rotate-180 text-[10px] leading-4 whitespace-nowrap text-[#444] [writing-mode:vertical-rl]">PALETA DE BOCETO</span>
    </aside>
  );
}

const N = "#30343e";
const viewTools = [
  ["Órbita", true, "w-[32px]", <><ellipse cx="8" cy="8" rx="3.500" ry="7.300" stroke={N} strokeDasharray="12 2" /><path d="M4 5C-1 6-1 10 5 11h6c6-1 5-5 1-6M11 9v4" stroke={N} /><path d="M6 8h4M8 6v4" stroke={B} strokeWidth="1.300" /></>],
  ["Mirar a", false, "w-[26px]", <><path d="M.8 6h14.500v9H.8zM3 5l3-3v2l7-3v2l-2 2" fill="#eee" stroke={N} strokeWidth="1.200" /><path d="M4 9h8v3H4z" fill="#9aa3b4" stroke={N} /></>],
  ["Encuadre", false, "w-[26px]", <path d="M5 15c0-2-4-5-4.500-7 1-1 2 0 3.500 1.500L3 3c0-1 1.500-1.500 2 0l1 4V1.500c0-1.500 2-1.500 2 0V7l1.200-5c.3-1.300 2-1 1.800.5L10.500 8l2-3.500c1-1.300 2.500-.5 2 .7C13 9 13 13 11 15z" fill="#fff" stroke={N} />],
  ["Zoom", false, "w-[26px]", <><circle cx="5.500" cy="6.500" r="4.500" fill="#dbe9ee" stroke={N} strokeWidth="1.200" /><path d="m9 10 4 4" stroke={N} strokeWidth="2.500" /><path d="M10.500 3h5M13 .5v5M10.500 7h5" stroke={N} /></>],
  ["Ajustar", true, "w-[33px]", <><path d="M.5.5h15v15H.5z" stroke={N} strokeDasharray="2 2" /><circle cx="7.500" cy="7" r="6" fill="#dbe9ee" stroke="#6f7782" strokeWidth="1.200" /><path d="m12 12 4 4" stroke={N} strokeWidth="2.500" /></>],
  ["Configuración de visualización", true, "w-[31px]", <><path d="M.6 1h14.800v11H.6z" fill="#fff" stroke={N} strokeWidth="1.200" /><path d="M2.500 3h11v7h-11z" fill="#9dbfe0" stroke="#405b80" /><path d="M5 14h6v1.500H5z" fill="#fff" stroke={N} /></>],
  ["Rejilla", true, "w-[31px]", <><path d="M.6.600h14.800v14.800H.6z" fill="#f4f4f6" stroke={N} strokeWidth="1.200" /><path d="M3.500 1v14M6.500 1v14M9.500 1v14M12.500 1v14M1 3.500h14M1 6.500h14M1 9.500h14M1 12.500h14" stroke="#858a94" /></>],
  ["Vistas", true, "w-[30px]", <><path d="M.6 2h14.800v12H.6z" fill="#a8c4e2" stroke="#3c5170" strokeWidth="1.300" /><path d="M8 2v12M1 8h14" stroke="#3c5170" strokeWidth="1.500" /><path d="M3 4h3v2H3zM10 4h3v2h-3zM3 10h3v2H3zM10 10h3v2h-3z" stroke="#6987ae" /></>],
];

function ViewToolbar() {
  return (
    <div className="absolute bottom-1 left-1/2 flex h-6 -translate-x-1/2 items-center bg-[#f1f1f1] pl-[3px]">
      {viewTools.map(([name, menu, w, art]) => (
        <button key={name} aria-label={name} className={`flex items-center gap-[3px] ${w}`}>
          <Svg w={16}>{art}</Svg>
          {menu && <Caret />}
        </button>
      ))}
    </div>
  );
}

/* ---------- Timeline ---------- */

const playback = [
  ["Inicio", "M0 1h2v14H0zM12 1v14L3 8z"],
  ["Paso atrás", "M9.500 1v14L0 8zM10.500 5H12v6h-1.500z"],
  ["Reproducir", "M0 0 12 7.500 0 15z"],
  ["Paso adelante", "M0 5h1.500v6H0zM2.500 1v14L12 8z"],
  ["Fin", "M12 1h-2v14h2zM0 1v14l9-7z"],
];

const features = {
  link: <><path d="M.7 4 4 .7h11.300V12L12 15.300H.7z" fill="#dedede" stroke="#5c5c5c" strokeWidth="1.200" /><g stroke="#6a6a6a" strokeWidth="1.200"><rect x="6.500" y="4.500" width="6" height="3.500" rx="1.700" transform="rotate(-40 9.500 6)" /><rect x="3" y="8.500" width="6" height="3.500" rx="1.700" transform="rotate(-40 6 10)" /></g></>,
  joint: <><path d="M.7 15V4l3-3 3 1v9l-3 1v3z" fill="#cfcfcf" stroke="#666" /><path d="M15.300 15V3l-3-2-3 1v9l3 1v3z" fill="#cfcfcf" stroke="#666" /><path d="M10.500 4v3M6.500 8v2.500" stroke={B} strokeWidth="1.500" /></>,
  flag: <><path d="M.7.700h5.500v14.600H.7z" fill="#fff" stroke="#666" strokeWidth="1.200" /><path d="M7 .7h8.500v6H7z" fill="#62b0ee" stroke="#3a85c0" strokeWidth=".8" /></>,
  sketch: <><path d="M2 2h11M2 3v11M13 3v4M3 14h5" stroke="#555" strokeDasharray="4 1" /><path d="M0 0h3v2H0zM12 0h3v2h-3zM0 13h3v3H0z" fill={B} /><path d="m8 16 1-3 4-4 2 2-4 4z" fill="#f9b53c" /><path d="m12.500 9.500 2-2 1.500 2-1.500 2z" fill="#e8474a" /></>,
};
const timeline = ["link", "link", "joint", "link", "joint", "link", "joint", "link", "joint", "flag", "sketch", "sketch"];

function Timeline() {
  return (
    <div className="flex h-[50px] shrink-0 border-t-2 border-[#c8c8c8] bg-[#f1f1f1]">
      <div className="flex items-start pt-4 pl-1">
        {playback.map(([name, d]) => (
          <button key={name} aria-label={name} className="flex h-4 w-[25px] items-center justify-center">
            <Svg w={12} h={16}><path d={d} fill="#444" /></Svg>
          </button>
        ))}
      </div>
      <div className="relative ml-[13px] flex pt-[15px]">
        {timeline.map((k, i) => (
          <button key={i} aria-label={`Operación ${i + 1}`} className="flex w-6 flex-col items-center">
            <Svg w={16}>{features[k]}</Svg>
            <span className="mt-[3px] flex h-[7px] w-full">
              <span className={`h-full flex-1 ${i > 0 ? "border-b-2 border-[#c6c6c6]" : ""}`} />
              <span className="h-full w-[2px] bg-[#c6c6c6]" />
              <span className={`h-full flex-1 ${i < timeline.length - 1 ? "border-b-2 border-[#c6c6c6]" : ""}`} />
            </span>
          </button>
        ))}
        <div className="absolute top-[9px] -right-[6px]">
          <Svg w={12} h={32}><path d="M0 0h12v4L7 9v23H5V9L0 4z" fill="#626262" /></Svg>
        </div>
      </div>
      <button aria-label="Preferencias de línea de tiempo" className="mt-4 mr-[13px] ml-auto h-4"><Gear /></button>
    </div>
  );
}

/* ---------- Taskbar ---------- */

const OfficeIcon = ({ letter, dark, c }) => (
  <Svg w={24}>
    <rect x="6" y="1" width="18" height="22" rx="1" fill={c[0]} />
    <path d="M6 6.500h18V12H6z" fill={c[1]} /><path d="M6 12h18v5.500H6z" fill={c[2]} /><path d="M6 17.500h18V23H6z" fill={c[3]} />
    <rect x="0" y="6" width="13" height="13" rx="1" fill={dark} />
    <text x="6.500" y="16.300" fontSize="11" fontWeight="700" fill="#fff" textAnchor="middle" fontFamily="Open Sans">{letter}</text>
  </Svg>
);

const Portrait = ({ x, y, r }) => (
  <g>
    <circle cx={x} cy={y} r={r} fill="#5d5860" />
    <path d={`M${x - 3} ${y + r - 1}c-2-8 0-${r + 4} 3-${r + 4}s5 3 4 ${r + 3}z`} fill="#1d171b" />
    <ellipse cx={x + 0.5} cy={y - 1} rx={r / 7} ry={r / 5} fill="#b58a78" />
  </g>
);

const apps = [
  ["Inicio", "", <Svg w={24} key="i"><defs><linearGradient id="win" x1="0" y1="0" x2="1" y2="1"><stop stopColor="#5ed0fa" /><stop offset="1" stopColor="#0473d0" /></linearGradient></defs><path d="M.5.500h11v11H.5zM12.500.500h11v11h-11zM.5 12.500h11v11H.5zM12.500 12.500h11v11h-11z" fill="url(#win)" /></Svg>],
  ["Buscar", "", <Svg w={24} key="i"><circle cx="14" cy="10" r="8.300" fill="#f1f4dc" stroke="#222" strokeWidth="2.200" /><path d="m8 16-6 6" stroke="#222" strokeWidth="3" strokeLinecap="round" /></Svg>],
  ["Excel", "", <OfficeIcon key="i" letter="X" dark="#107c41" c={["#26a169", "#21925a", "#178a4c", "#185c37"]} />],
  ["Notas", "", <Svg w={22} key="i"><path d="M0 0h22v22H0z" fill="#3e3e3e" /><path d="M11 11h11L11 22z" fill="#ffd60a" /><path d="M22 11v11H11z" fill="#2c2c2c" /></Svg>],
  ["Word", "", <OfficeIcon key="i" letter="W" dark="#185abd" c={["#41a5ee", "#2b7cd3", "#1d63c4", "#103f91"]} />],
  ["Explorador", "dot", <Svg w={24} key="i"><path d="M0 2h9l3 3h12v18H0z" fill="#ffc83d" /><path d="M0 2h9l2 2-2 2H0z" fill="#dd9a0c" /><path d="M0 7h24v15H0z" fill="#ffd05c" /><path d="M4 23v-5q0-2 2-2h12q2 0 2 2v5z" fill="#1878cf" /><path d="M8 19h8v2H8z" fill="#0c569f" /></Svg>],
  ["Chrome", "dot", <Svg w={34} h={30} vb="-5 1 34 30" key="i"><circle cx="11" cy="18" r="11" fill="#e33b2e" /><path d="M11 18 1.500 12.500A11 11 0 0 0 11 29l5-8z" fill="#23a14b" /><path d="m11 29 6-11-1-5h5.800A11 11 0 0 1 11 29z" fill="#fbc31b" /><circle cx="11" cy="18" r="5.500" fill="#fff" /><circle cx="11" cy="18" r="4.300" fill="#2b7de9" /><Portrait x={20} y={9} r={8} /><Portrait x={17} y={24} r={6} /></Svg>],
  ["Teams", "dot", <Svg w={34} h={28} vb="-4 0 34 28" key="i"><circle cx="14" cy="7" r="4" fill="#6b70d6" /><path d="M9 11h16v7a7 7 0 0 1-7 8c-5 0-9-4-9-9z" fill="#7b83eb" /><path d="M18 11h7v6a6 6 0 0 1-7 7z" fill="#5b62c8" /><rect x="1" y="9" width="13" height="13" rx="1" fill="#464eb8" /><text x="7.500" y="19.500" fontSize="11" fontWeight="700" fill="#fff" textAnchor="middle" fontFamily="Open Sans">T</text><circle cx="24" cy="6" r="6" fill="#e8f0c4" /><circle cx="24" cy="6" r="5" fill="#6bb700" /><path d="m21 6 2 2 4-4" stroke="#fff" strokeWidth="1.500" /></Svg>],
  ["Fusion 360", "active", <Svg w={24} key="i"><defs><linearGradient id="fus" x1="0" y1="0" x2="1" y2="1"><stop stopColor="#f9d9bf" /><stop offset="1" stopColor="#fff4ea" /></linearGradient></defs><rect width="24" height="24" fill="url(#fus)" /><path d="M7 2h11v4h-6v3h5v4h-5v6H7z" fill="#d8822f" /><path d="M7 2v17l2 1V5z" fill="#a85a17" /><text x="13" y="23" fontSize="6" fill="#e08a48" fontFamily="Liberation Sans" fontWeight="700">360</text></Svg>],
  ["Fotos", "dot", <Svg w={22} key="i"><path d="M0 0h22v22H0z" fill="#29a9e8" /><path d="M10 14 15 9l7 6v7H10z" fill="#5a86e0" /><path d="M0 13 6 8l14 14H0z" fill="#123f7c" /><circle cx="15" cy="5" r="2" fill="#fff" /></Svg>],
];

function Taskbar() {
  return (
    <footer className={`flex h-12 shrink-0 items-center bg-[linear-gradient(90deg,#e8ef8b_0%,#e5ee98_5%,#dae3ba_7%,#dee4b1_20%,#e0e9aa_30%,#e6f19a_38%,#e7f299_62%,#e2eca4_72%,#dae4bd_85%,#dde7b1_88%,#e6ef90_90%,#e7ee94_100%)] text-[#1b1b1b] shadow-[inset_0_1px_0_#ced68c] ${SEGOE}`}>
      <div className="flex-1" />
      <nav className="flex h-full items-center pl-px">
        {apps.map(([name, state, icon]) => (
          <button key={name} aria-label={name} className="relative flex h-full w-11 items-center justify-center">
            <span className={`flex h-[38px] w-[38px] items-center justify-center rounded-[4px] ${state === "active" ? "border border-white/60 bg-white/50" : ""}`}>
              {icon}
            </span>
            {state === "dot" && <span className="absolute bottom-[5px] h-[3px] w-[6px] rounded-full bg-[#7d8557]" />}
            {state === "active" && <span className="absolute bottom-[5px] h-[3px] w-4 rounded-full bg-[#0a78d4]" />}
          </button>
        ))}
      </nav>
      <div className="flex h-full flex-1 items-center justify-end text-[11px] leading-4">
        <button aria-label="Iconos ocultos" className="mr-4">
          <Svg w={12} h={7}><path d="m.5 6.500 5.500-5.500 5.500 5.500" stroke="#1b1b1b" strokeWidth="1.300" /></Svg>
        </button>
        <button className="mr-[17px] w-6 text-center">ESP<br />LAA</button>
        <button aria-label="Red" className="mr-[7px]">
          <Svg w={17} h={16}><path d="M11 1.500H2q-1.500 0-1.500 1.500v7q0 1.500 1.500 1.500h10V9M6 12v3M4 15h8M14.500 6v9M12 1.500h4v3.500q-2 2-4 0z" stroke="#1b1b1b" strokeWidth="1.200" /></Svg>
        </button>
        <button aria-label="Volumen" className="mr-[14px]">
          <Svg w={17} h={14}><path d="M.6 5h3L7.500 1.500v11L3.500 9h-3z" stroke="#1b1b1b" strokeWidth="1.200" /><path d="M9.500 5q1.500 2 0 4" stroke="#1b1b1b" /><path d="M11.500 3q3 4 0 8M13.500 1.500q4 5.500 0 11" stroke="#9aa076" /></Svg>
        </button>
        <button className="mr-[19px] text-right text-[12px]">17:21<br />23/04/2022</button>
      </div>
    </footer>
  );
}

export default function App() {
  return (
    <div className={`flex h-screen w-full flex-col overflow-hidden bg-white ${UI}`}>
      <TitleBar />
      <TabBar />
      <Ribbon />
      <main className="relative min-h-0 flex-1 overflow-hidden">
        <Viewport />
        <Navigator />
        <ViewCube />
        <SketchPalette />
        <ViewToolbar />
      </main>
      <Timeline />
      <Taskbar />
    </div>
  );
}
